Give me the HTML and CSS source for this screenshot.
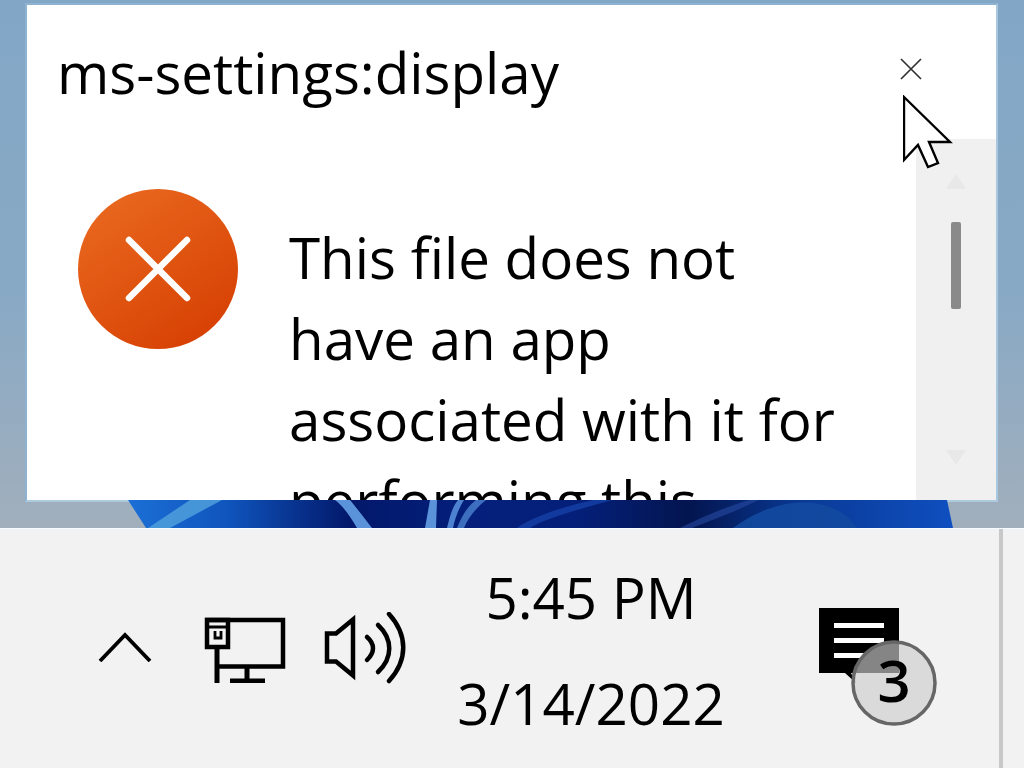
FILE: index.html
```html
<!DOCTYPE html>
<html lang="en">
<head>
<meta charset="utf-8">
<title>ms-settings:display</title>
<link rel="stylesheet" href="styles.css">
</head>
<body>
<div class="desktop">
  <svg class="wallpaper" width="1024" height="28" viewBox="0 500 1024 28" aria-hidden="true">
    <defs>
      <linearGradient id="wp" x1="0" y1="0" x2="1" y2="0">
        <stop offset="0" stop-color="#1b6fd6"/>
        <stop offset=".12" stop-color="#0f55bd"/>
        <stop offset=".27" stop-color="#02186a"/>
        <stop offset=".42" stop-color="#04207c"/>
        <stop offset=".55" stop-color="#041f78"/>
        <stop offset=".68" stop-color="#03154f"/>
        <stop offset=".82" stop-color="#0a3a96"/>
        <stop offset="1" stop-color="#0f4fc0"/>
      </linearGradient>
    </defs>
    <path d="M128 500H947L953 528H146Z" fill="url(#wp)"/>
    <path d="M148 528L190 500H222L170 528Z" fill="#4f9fdc" opacity=".85"/>
    <path d="M335 500H350C358 510 366 520 372 528H357C351 518 345 508 335 500Z" fill="#5b93da"/>
    <path d="M425 528L430 500H437L436 528Z" fill="#5b93da"/>
    <path d="M447 528C450 515 453 506 458 500H464C459 508 455 518 453 528Z" fill="#4c82d0"/>
    <path d="M457 528C462 515 468 506 476 500H486C476 508 468 518 464 528Z" fill="#4c82d0" opacity=".8"/>
    <path d="M517 528C535 515 570 505 593 500H612C585 508 545 518 530 528Z" fill="#123a9e"/>
    <path d="M680 528C700 518 730 505 750 500H758C740 510 712 520 692 528Z" fill="#2b4ea8" opacity=".55"/>
    <path d="M733 528C780 493 835 495 857 528Z" fill="#134aa0" opacity=".9"/>
  </svg>

  <section class="dialog">
    <header class="dialog-head">
      <h1 class="dialog-title">ms-settings:display</h1>
      <svg class="close" width="22" height="22" viewBox="0 0 22 22" aria-hidden="true">
        <path d="M1 1L21 21M21 1L1 21" stroke="#333" stroke-width="1.7" fill="none"/>
      </svg>
    </header>
    <div class="dialog-body">
      <div class="message">
        <svg class="error-icon" width="160" height="160" viewBox="0 0 160 160" aria-hidden="true">
          <defs>
            <linearGradient id="err" x1=".15" y1=".05" x2=".8" y2="1">
              <stop offset="0" stop-color="#e9681f"/>
              <stop offset="1" stop-color="#d63f02"/>
            </linearGradient>
          </defs>
          <circle cx="80" cy="80" r="80" fill="url(#err)"/>
          <path d="M51 51L109 109M109 51L51 109" stroke="#fff" stroke-width="6.5" stroke-linecap="round" fill="none"/>
        </svg>
        <p class="message-text">This file does not have an app associated with it for performing this</p>
      </div>
      <div class="scrollbar">
        <span class="arrow arrow-up"></span>
        <span class="thumb"></span>
        <span class="arrow arrow-down"></span>
      </div>
    </div>
  </section>

  <svg class="cursor" width="50" height="74" viewBox="903 95 50 74" aria-hidden="true">
    <path d="M904 97L950 142H929L938 163L928 167L918 145L904 160Z" fill="#fff" stroke="#000" stroke-width="2.4" stroke-linejoin="miter"/>
  </svg>
</div>

<footer class="taskbar">
  <svg class="tray-chevron" width="54" height="30" viewBox="98 632 54 30" aria-hidden="true">
    <path d="M100 661L125 635L150 661" fill="none" stroke="#000" stroke-width="3.8"/>
  </svg>
  <svg class="tray-network" width="82" height="66" viewBox="204 617 82 66" aria-hidden="true">
    <path d="M205 620H283V666.500H217" fill="none" stroke="#000" stroke-width="4.500"/>
    <path d="M207 620H228V647H207Z" fill="none" stroke="#000" stroke-width="4.500"/>
    <path d="M206 627H228" stroke="#000" stroke-width="3"/>
    <path d="M215 631V638H221V631" fill="none" stroke="#000" stroke-width="2.800"/>
    <path d="M217 647V683M247 667V680M230 681H265" fill="none" stroke="#000" stroke-width="5"/>
  </svg>
  <svg class="tray-volume" width="82" height="72" viewBox="324 612 82 72" aria-hidden="true">
    <path d="M327 633.500H336L353 619.500V675.500L336 661.500H327Z" fill="none" stroke="#000" stroke-width="4.500"/>
    <path d="M367 637C375 644 375 652 367 660" fill="none" stroke="#000" stroke-width="4.500" stroke-linecap="round"/>
    <path d="M378 625C393 639 393 658 378 672" fill="none" stroke="#000" stroke-width="4.500" stroke-linecap="round"/>
    <path d="M389 614C408 635 408 660 389 681" fill="none" stroke="#000" stroke-width="4.500" stroke-linecap="round"/>
  </svg>
  <div class="clock">
    <span class="clock-line">5:45 PM</span>
    <span class="clock-line">3/14/2022</span>
  </div>
  <div class="notify">
    <svg width="120" height="120" viewBox="818 606 120 120" aria-hidden="true">
      <path d="M819 608H899V673H851L856 683L845 673H819Z" fill="#000"/>
      <path d="M834 623H884V628H834ZM834 638H884V643H834ZM834 653H864V658H834Z" fill="#fff"/>
      <circle cx="894" cy="683" r="41" fill="#cdcdcd" fill-opacity=".65" stroke="#666" stroke-width="3.500"/>
    </svg>
    <span class="notify-count">3</span>
  </div>
  <span class="edge"></span>
</footer>
</body>
</html>
```
FILE: styles.css
```css
* { box-sizing: border-box; }
html, body { margin: 0; padding: 0; }
body {
  width: 1024px;
  height: 768px;
  overflow: hidden;
  background: #f2f2f2;
  font-family: "Open Sans", "Noto Sans", sans-serif;
  color: #000;
}

.desktop {
  position: relative;
  height: 528px;
  padding: 3px 26px 26px 25px;
  background: linear-gradient(180deg, #82a7c6 0%, #88a9c5 55%, #a1afbc 100%);
}
.wallpaper {
  position: absolute;
  left: 0;
  bottom: 0;
  z-index: 2;
  display: block;
}
.dialog {
  height: 499px;
  display: flex;
  flex-direction: column;
  background: #fff;
  border: 2px solid #8db2d2;
  border-right-color: #a9c8e0;
  border-bottom-color: #aecadf;
  overflow: hidden;
}
.dialog-head {
  height: 134px;
  flex: none;
  display: flex;
  align-items: flex-start;
  justify-content: space-between;
  padding: 36px 74px 0 30px;
}
.dialog-title {
  margin: 0;
  font-size: 56.5px;
  line-height: 64px;
  font-weight: 400;
}
.close { margin-top: 17px; display: block; }

.dialog-body {
  flex: 1;
  min-height: 0;
  display: flex;
}
.message {
  flex: 1;
  min-width: 0;
  display: flex;
  align-items: flex-start;
  padding: 50px 0 0 51px;
}
.error-icon { flex: none; display: block; }
.message-text {
  margin: 28px 0 0 51px;
  width: 570px;
  font-size: 56.5px;
  line-height: 81px;
}
.scrollbar {
  width: 80px;
  flex: none;
  background: #f0f0f0;
  display: flex;
  flex-direction: column;
  align-items: center;
  padding-top: 35px;
}
.arrow {
  width: 0;
  height: 0;
  border-left: 10px solid transparent;
  border-right: 10px solid transparent;
}
.arrow-up { border-bottom: 15px solid #e8e8e8; }
.arrow-down { border-top: 15px solid #e8e8e8; margin-top: 141px; }
.thumb {
  width: 10px;
  height: 87px;
  margin-top: 33px;
  border-radius: 2px;
  background: #8a8a8a;
}

.cursor {
  position: absolute;
  left: 903px;
  top: 95px;
  z-index: 3;
  display: block;
}

.taskbar {
  height: 240px;
  display: flex;
  align-items: flex-start;
  background: #f2f2f2;
  border-top: 1px solid #f6fbff;
  padding-left: 98px;
}
.tray-chevron { margin-top: 103px; flex: none; }
.tray-network { margin: 88px 0 0 52px; flex: none; }
.tray-volume { margin: 83px 0 0 38px; flex: none; }
.clock {
  width: 300px;
  margin-left: 35px;
  margin-top: 35px;
  display: flex;
  flex-direction: column;
  align-items: center;
  font-size: 56.5px;
  line-height: 68px;
  gap: 38px;
  flex: none;
}
.clock-line { display: block; }
.notify {
  position: relative;
  margin: 77px 0 0 77px;
  width: 120px;
  height: 120px;
  flex: none;
}
.notify svg { display: block; }
.notify-count {
  position: absolute;
  left: 55px;
  top: 34px;
  width: 42px;
  text-align: center;
  font-size: 58px;
  line-height: 80px;
  font-weight: 600;
}
.edge {
  width: 4px;
  height: 240px;
  margin-left: 61px;
  background: #c8c8c8;
  flex: none;
}
```
